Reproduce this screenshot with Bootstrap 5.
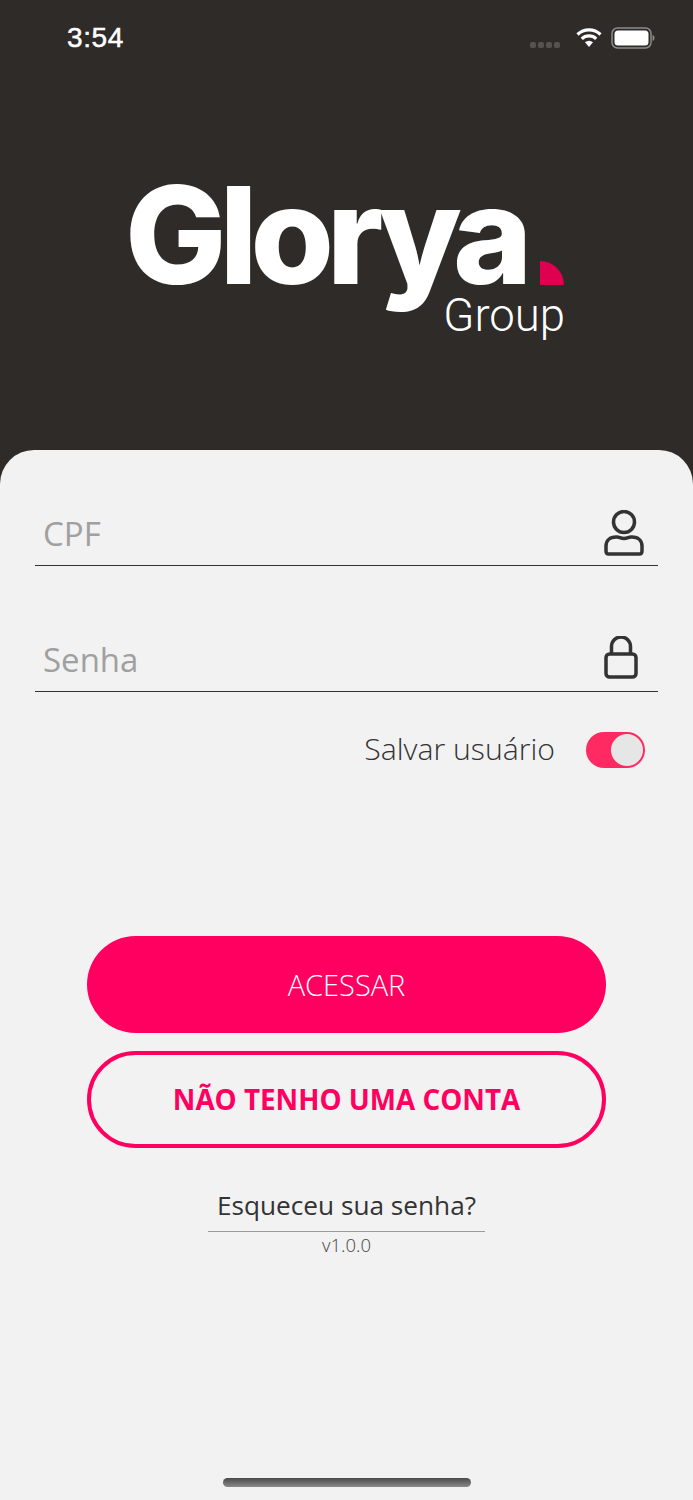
<!DOCTYPE html>
<html lang="pt-BR">
<head>
    <meta charset="UTF-8">
    <meta name="viewport" content="width=device-width, initial-scale=1.0">
    <title>Glorya Group</title>
    <link href="https://cdn.jsdelivr.net/npm/bootstrap@5.3.0/dist/css/bootstrap.min.css" rel="stylesheet">
    <style>
        body {
            background-color: #2e2b29;
            font-family: "Open Sans", sans-serif;
            width: 693px;
            height: 1500px;
            overflow: hidden;
        }
        .topo { height: 450px; }
        .barra-status { height: 76px; padding: 0 38px 0 67px; }
        .hora { font-family: "Liberation Sans", sans-serif; font-size: 28px; color: #fff; letter-spacing: .6px; -webkit-text-stroke: .5px #fff; }
        .sinal { gap: 2px; margin-top: 14px; margin-right: 15px; }
        .sinal span { width: 6px; height: 6px; border-radius: 2px; background: #55524f; }
        .logo { width: 440px; margin: 0 auto 0 125px; padding-top: 92px; position: relative; }
        .logo-nome { font-family: Inter, sans-serif; font-weight: 800; font-size: 135px; line-height: 1; letter-spacing: -7.2px; color: #fff; }
        .logo-grupo { font-family: Roboto, sans-serif; font-weight: 300; font-size: 45.5px; line-height: 1; color: #fff; margin-top: -10px; padding-right: 0; }
        .logo-ponto { position: absolute; left: 415px; top: 185px; width: 24px; height: 24px; background: #df0050; border-top-right-radius: 24px; }
        .folha { background: #f2f2f2; height: 1050px; border-radius: 34px 34px 0 0; padding: 0 35px; }
        .campo { height: 116px; border-bottom: 1px solid #333; }
        .campo + .campo { height: 126px; }
        .campo input {
            background: transparent; border: 0; border-radius: 0; box-shadow: none;
            font-size: 33px; font-weight: 400; color: #333; padding: 0 0 6px 8px; height: 58px;
        }
        .campo input::placeholder { color: #a0a0a0; opacity: 1; }
        .salvar { height: 118px; padding: 0 13px 4px 0; gap: 31px; font-size: 30.2px; font-weight: 300; color: #333; }
        .chave { width: 59px; height: 36px; border-radius: 18px; background: #ff2a62; padding: 2px; margin-top: 2px; }
        .chave-bola { width: 32px; height: 32px; border-radius: 50%; background: #e6e6e6; }
        .botoes { width: 519px; margin: 126px auto 0 52px; gap: 18px; }
        .btn-rosa, .btn-contorno { height: 97px; border-radius: 49px; display: flex; align-items: center; justify-content: center; }
        .btn-rosa { background: #ff0060; color: #fff; border: 0; font-weight: 300; font-size: 29px; }
        .btn-contorno { background: transparent; color: #ff0060; border: 4px solid #ff0060; font-weight: 700; font-size: 27.8px; }
        .esqueceu { width: 277px; margin: 40px auto 0 173px; border-bottom: 1px solid #9a9a9a; font-size: 26.2px; color: #333; text-decoration: none; display: block; text-align: center; font-weight: 400; line-height: 43px; padding-bottom: 3px; height: 44px; }
        .esqueceu span { position: relative; top: -4px; }
        .versao { width: 277px; margin: 0 auto 0 173px; font-size: 18.500px; font-weight: 300; color: #444; text-align: center; line-height: 26px; }
        .home { width: 248px; height: 9px; border-radius: 5px; background: linear-gradient(#4a4a4a, #8a8a8a); margin: 220px auto 0 188px; }
    </style>
</head>
<body>
    <div class="topo">
        <!-- Barra de status -->
        <div class="barra-status d-flex align-items-center justify-content-between">
            <span class="hora">3:54</span>
            <div class="d-flex align-items-center">
                <div class="sinal d-flex"><span></span><span></span><span></span><span></span></div>
                <svg width="28" height="22" viewBox="0 0 28 22" class="me-2" style="margin-bottom:2px">
                    <path d="M2.500 8.500a16.500 16.500 0 0 1 23 0M6.800 12.800a10.500 10.500 0 0 1 14.400 0" fill="none" stroke="#fff" stroke-width="3.200"/>
                    <path d="M10 16.200a6 6 0 0 1 8 0L14 21z" fill="#fff"/>
                </svg>
                <svg width="44" height="22" viewBox="0 0 44 22">
                    <rect x="1" y="1" width="39" height="20" rx="5.500" fill="none" stroke="#8d8b89" stroke-width="1.500"/>
                    <rect x="3.500" y="3.500" width="34" height="15" rx="3.500" fill="#fff"/>
                    <path d="M41.500 8c1.500.4 2 1.600 2 3s-.5 2.600-2 3z" fill="#8d8b89"/>
                </svg>
            </div>
        </div>
        <!-- Logo -->
        <div class="logo">
            <div class="logo-nome">Glorya</div>
            <div class="logo-grupo text-end">Group</div>
            <div class="logo-ponto"></div>
        </div>
    </div>

    <div class="folha">
        <div class="campo d-flex align-items-end">
            <input type="text" class="form-control" placeholder="CPF">
            <svg width="40" height="46" viewBox="0 0 40 46" class="flex-shrink-0" style="margin:0 14px 9px 0">
                <circle cx="20" cy="12" r="10.500" fill="none" stroke="#333" stroke-width="3.500"/>
                <path d="M12 27h1c2.500 0 3.500 1.500 7 1.500s4.500-1.500 7-1.500h1c6 0 10 3.500 10 9v5c0 2-1 3-2.500 3h-31C3 44 2 43 2 41v-5c0-5.500 4-9 10-9z" fill="none" stroke="#333" stroke-width="3.500" stroke-linejoin="round"/>
            </svg>
        </div>
        <div class="campo d-flex align-items-end">
            <input type="password" class="form-control" placeholder="Senha">
            <svg width="34" height="43" viewBox="0 0 34 43" class="flex-shrink-0" style="margin:0 20px 12px 0">
                <path d="M7.500 18v-7.500a9.500 9.500 0 0 1 19 0V18" fill="none" stroke="#333" stroke-width="3.500"/>
                <rect x="2" y="18" width="30" height="23" rx="3.500" fill="none" stroke="#333" stroke-width="3.500"/>
            </svg>
        </div>
        <div class="salvar d-flex align-items-center justify-content-end">
            <span>Salvar usuário</span>
            <div class="chave d-flex justify-content-end"><div class="chave-bola"></div></div>
        </div>
        <div class="botoes d-flex flex-column">
            <button class="btn btn-rosa" type="button">ACESSAR</button>
            <button class="btn btn-contorno" type="button">NÃO TENHO UMA CONTA</button>
        </div>
        <a href="#" class="esqueceu"><span>Esqueceu sua senha?</span></a>
        <div class="versao">v1.0.0</div>
        <div class="home"></div>
    </div>
    <script src="https://cdn.jsdelivr.net/npm/bootstrap@5.3.0/dist/js/bootstrap.bundle.min.js"></script>
</body>
</html>
